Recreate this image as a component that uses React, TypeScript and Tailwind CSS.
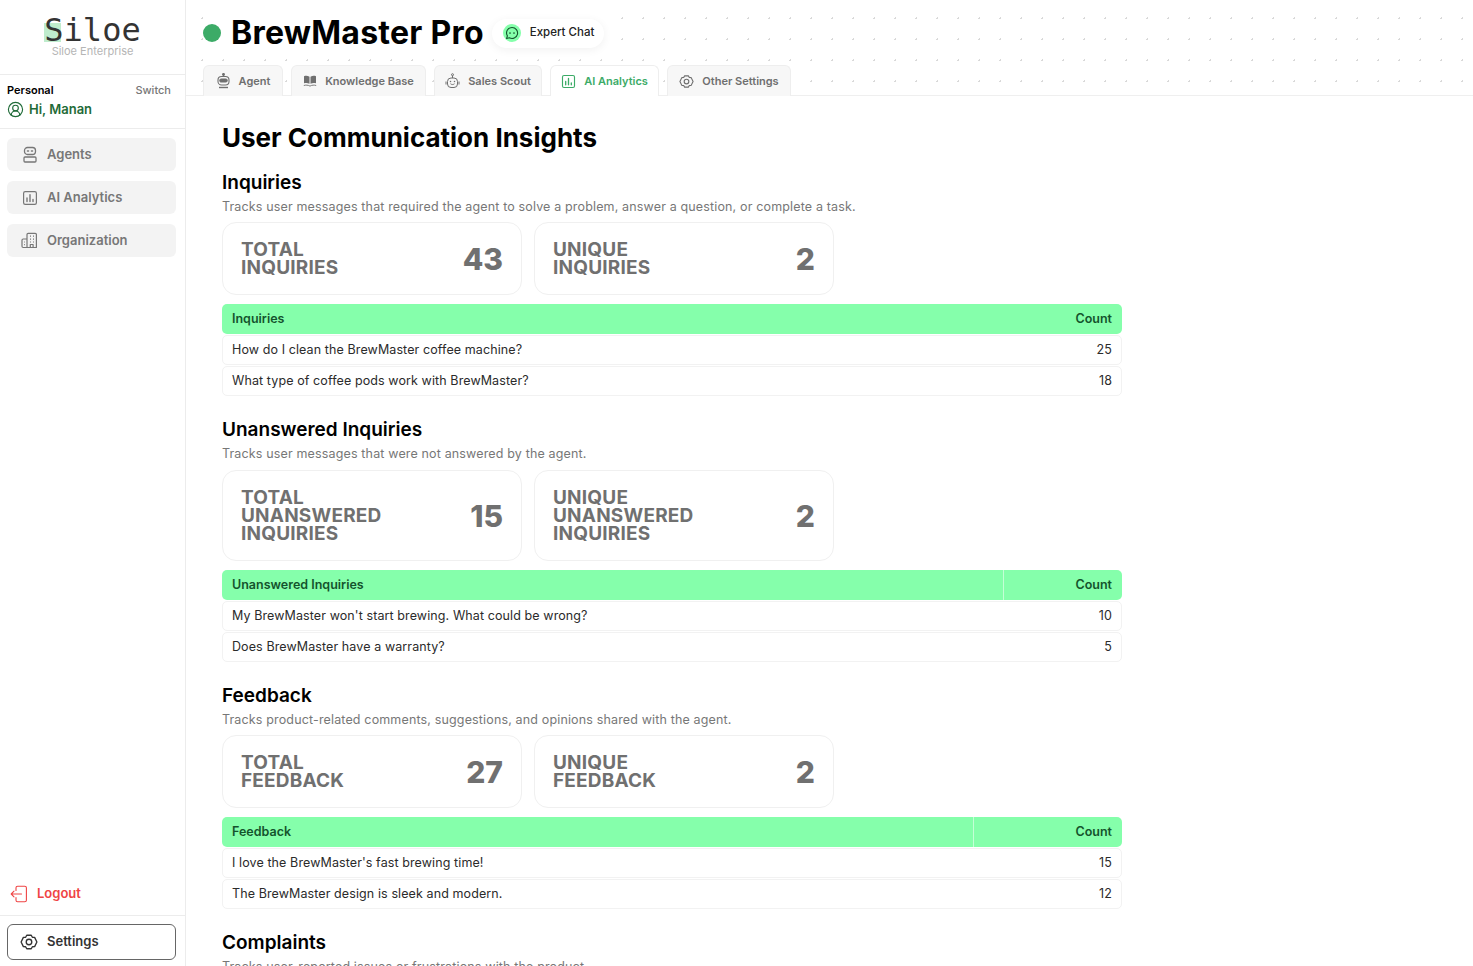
import { CircleUserRound } from "lucide-react";
import type { ReactNode } from "react";

const sections = [
  {
    title: "Inquiries",
    desc: "Tracks user messages that required the agent to solve a problem, answer a question, or complete a task.",
    cards: [
      { label: ["TOTAL", "INQUIRIES"], value: "43" },
      { label: ["UNIQUE", "INQUIRIES"], value: "2" },
    ],
    head: "Inquiries",
    divider: "",
    rows: [
      ["How do I clean the BrewMaster coffee machine?", "25"],
      ["What type of coffee pods work with BrewMaster?", "18"],
    ],
  },
  {
    title: "Unanswered Inquiries",
    desc: "Tracks user messages that were not answered by the agent.",
    cards: [
      { label: ["TOTAL", "UNANSWERED", "INQUIRIES"], value: "15" },
      { label: ["UNIQUE", "UNANSWERED", "INQUIRIES"], value: "2" },
    ],
    head: "Unanswered Inquiries",
    divider: "border-l border-[#c4ffd6] w-[119px]",
    rows: [
      ["My BrewMaster won't start brewing. What could be wrong?", "10"],
      ["Does BrewMaster have a warranty?", "5"],
    ],
  },
  {
    title: "Feedback",
    desc: "Tracks product-related comments, suggestions, and opinions shared with the agent.",
    cards: [
      { label: ["TOTAL", "FEEDBACK"], value: "27" },
      { label: ["UNIQUE", "FEEDBACK"], value: "2" },
    ],
    head: "Feedback",
    divider: "border-l border-[#c4ffd6] w-[149px]",
    rows: [
      ["I love the BrewMaster's fast brewing time!", "15"],
      ["The BrewMaster design is sleek and modern.", "12"],
    ],
  },
];

function AgentIcon() {
  return (
    <svg width="16" height="18" viewBox="0 0 16 18" fill="none" stroke="#777" strokeWidth="1.3">
      <rect x="2.5" y="1.5" width="11" height="7" rx="3" />
      <rect x="2" y="11" width="12" height="5" rx="1" />
      <path d="M5.5 5h1M9.5 5h1" strokeLinecap="round" strokeWidth="1.6" />
    </svg>
  );
}

function ChartBoxIcon({ size, color }: { size: number; color: string }) {
  return (
    <svg width={size} height={size} viewBox="0 0 16 16" fill="none" stroke={color} strokeWidth="1.2">
      <rect x="1.6" y="1.6" width="12.8" height="12.8" rx="1.6" />
      <path d="M5 11.5V8M8 11.5V4.8M11 11.5v-2" strokeWidth="1.4" strokeLinecap="round" />
    </svg>
  );
}

function BuildingIcon() {
  return (
    <svg width="17" height="17" viewBox="0 0 17 17" fill="none" stroke="#777" strokeWidth="1.2" strokeLinejoin="round">
      <path d="M6 15.5V2.5a1.2 1.2 0 0 1 1.2-1.2h7a1.2 1.2 0 0 1 1.2 1.2v13z" />
      <path d="M6 7H2.2A1.2 1.2 0 0 0 1 8.2v6.1c0 .7.5 1.2 1.2 1.2H6" />
      <path d="M9.3 15.5v-3h2.8v3M9 4.2h1M12 4.2h1M9 7.2h1M12 7.2h1M9 10h1M12 10h1M3.2 10h.8M3.2 12.7h.8" />
    </svg>
  );
}

function GearIcon({ size, color }: { size: number; color: string }) {
  return (
    <svg width={size} height={size} viewBox="0 0 24 24" fill="none" stroke={color} strokeWidth="1.8" strokeLinejoin="round">
      <path d="M9 3h6l1.5 2.7 3 .1L22.5 12l-3 6.2-3 .1L15 21H9l-1.5-2.7-3-.1L1.500 12l3-6.200 3-.1z" />
      <circle cx="12" cy="12" r="3.700" />
    </svg>
  );
}

function LogoutIcon() {
  return (
    <svg width="18" height="18" viewBox="0 0 18 18" fill="none" stroke="#ef4444" strokeWidth="1.1" strokeLinecap="round" strokeLinejoin="round">
      <path d="M6 5.500V2.800C6 1.900 6.700 1.200 7.600 1.200h7.200c.9 0 1.600.7 1.600 1.600v12.400c0 .9-.7 1.600-1.600 1.600H7.600C6.700 16.800 6 16.100 6 15.200v-2.700" />
      <path d="M11.500 9H1.200M4 6.200 1.200 9 4 11.800" />
    </svg>
  );
}

function RobotTabIcon() {
  return (
    <svg width="15" height="16" viewBox="0 0 15 16" fill="none" stroke="#6f6f6f" strokeWidth="1.1">
      <path d="M7.500 1v2.500" />
      <circle cx="7.500" cy="1.400" r=".9" fill="#6f6f6f" />
      <rect x="2" y="3.500" width="11" height="8.500" rx="3.500" />
      <rect x="3.800" y="6" width="7.400" height="3" rx="1.500" fill="#6f6f6f" />
      <path d="M3 14.500h9" strokeWidth="1.400" />
    </svg>
  );
}

function BookIcon() {
  return (
    <svg width="14" height="14" viewBox="0 0 14 14" fill="#6f6f6f">
      <path d="M1 2.200C2.800 1.600 4.800 1.700 6.500 2.700v7C4.800 8.800 2.800 8.700 1 9.300z" />
      <path d="M13 2.200c-1.800-.6-3.800-.5-5.500.5v7c1.700-.9 3.700-1 5.500-.4z" />
      <path d="M.8 11.500c2-.6 4.300-.5 6.200.6 1.900-1.100 4.200-1.200 6.200-.6" fill="none" stroke="#6f6f6f" strokeWidth=".9" />
    </svg>
  );
}

function ScoutIcon() {
  return (
    <svg width="15" height="16" viewBox="0 0 15 16" fill="none" stroke="#6f6f6f" strokeWidth="1">
      <circle cx="7.500" cy="1.700" r="1" />
      <path d="M7.500 2.700V5M1 8.500v3M14 8.500v3" />
      <rect x="2.500" y="5" width="10" height="9.500" rx="3.500" />
      <path d="M5.500 8.500h.01M9.500 8.500h.01" strokeWidth="1.500" strokeLinecap="round" />
      <path d="M5.800 11c.9.8 2.500.8 3.400 0" strokeLinecap="round" />
    </svg>
  );
}

function ChatIcon() {
  return (
    <svg width="14" height="14" viewBox="0 0 14 14" fill="none" stroke="#14532d" strokeWidth="1.100" strokeLinecap="round" strokeLinejoin="round">
      <path d="M7 1.500a5.500 5.500 0 1 1-2.600 10.300L1.600 12.500l.8-2.600A5.500 5.500 0 0 1 7 1.500z" />
      <path d="M5 7h.01M9 7h.01" strokeWidth="1.700" />
    </svg>
  );
}

function SideItem({ icon, label }: { icon: ReactNode; label: string }) {
  return (
    <div className="flex h-[33px] items-center gap-[9px] rounded-md bg-[#f3f3f3] pl-[14px] text-[13px] font-semibold text-[#777]">
      <span className="flex w-[17px] justify-center">{icon}</span>
      {label}
    </div>
  );
}

function Tab({ icon, label, width, active }: { icon: ReactNode; label: string; width: string; active?: boolean }) {
  return (
    <div
      className={`flex h-[31px] items-center justify-center gap-[8px] rounded-t-md border border-b-0 border-[#eeeeee] text-[11px] font-semibold ${width} ${
        active ? "bg-white text-[#3cab67]" : "bg-[#f7f7f7] text-[#6f6f6f]"
      }`}
    >
      {icon}
      {label}
    </div>
  );
}

function StatCard({ label, value }: { label: string[]; value: string }) {
  return (
    <div className="flex w-[300px] items-center justify-between rounded-[14px] border border-[#f0f0f0] bg-white py-[17.5px] pl-[18px] pr-[18px]">
      <div className="text-[19px] font-bold leading-[18px] tracking-[0.2px] text-[#707070]">
        {label.map((line) => (
          <div key={line}>{line}</div>
        ))}
      </div>
      <div className="text-[30px] font-extrabold leading-none text-[#707070]">{value}</div>
    </div>
  );
}

function DataTable({ head, divider, rows }: { head: string; divider: string; rows: string[][] }) {
  return (
    <div className="mt-[9px] flex w-[900px] flex-col gap-px">
      <div className="flex h-[30px] items-center justify-between rounded-[5px] bg-[#85ffab] text-[12.5px] font-semibold text-[#14532d]">
        <span className="pl-[10px]">{head}</span>
        <span className={`flex h-full items-center justify-end pr-[10px] ${divider}`}>Count</span>
      </div>
      {rows.map(([text, count]) => (
        <div key={text} className="flex h-[30px] items-center justify-between rounded-[5px] border border-[#f2f2f2] bg-white px-[9px] text-[12.5px] tracking-[0.1px] text-[#2b2b2b]">
          <span>{text}</span>
          <span>{count}</span>
        </div>
      ))}
    </div>
  );
}

export default function App() {
  return (
    <div className="flex h-screen overflow-hidden bg-white font-['Inter','Liberation_Sans',sans-serif]">
      {/* sidebar */}
      <aside className="flex h-full w-[186px] shrink-0 flex-col border-r border-[#ececec]">
        <div className="flex h-[75px] flex-col items-center border-b border-[#ececec] pt-[15px]">
          <div className="relative font-['DejaVu_Sans_Mono',monospace] text-[32px] leading-[30px] text-[#333]">
            <span className="absolute left-0 top-[8px] h-[19px] w-[17px] bg-[#bfeccd]" />
            <span className="relative">Siloe</span>
          </div>
          <div className="text-[11px] leading-[12px] text-[#b5b5b5]">Siloe Enterprise</div>
        </div>
        <div className="flex h-[54px] flex-col justify-center gap-px border-b border-[#ececec] pb-[2px] pl-[7px] pr-[14px]">
          <div className="flex items-center justify-between text-[11px] font-semibold text-black">
            Personal
            <span className="font-medium text-[#777]">Switch</span>
          </div>
          <div className="flex items-center gap-[5px] text-[13px] font-semibold text-[#1f6b38]">
            <CircleUserRound size={17} strokeWidth={1.6} />
            Hi, Manan
          </div>
        </div>
        <nav className="mt-[9px] flex flex-col gap-[10px] pl-[7px] pr-[9px]">
          <SideItem icon={<AgentIcon />} label="Agents" />
          <SideItem icon={<ChartBoxIcon size={16} color="#777" />} label="AI Analytics" />
          <SideItem icon={<BuildingIcon />} label="Organization" />
        </nav>
        <div className="mt-auto flex h-[44px] items-center gap-[9px] border-b border-[#ececec] pl-[10px] text-[13px] font-semibold text-[#ef4444]">
          <LogoutIcon />
          Logout
        </div>
        <div className="pb-[6px] pl-[7px] pr-[9px] pt-[8px]">
          <div className="flex h-[36px] items-center gap-[9px] rounded-md border border-[#666] pl-[12px] text-[13px] font-semibold text-[#333]">
            <GearIcon size={18} color="#333" />
            Settings
          </div>
        </div>
      </aside>

      <main className="flex min-w-0 flex-1 flex-col">
        {/* header */}
        <header className="h-[96px] shrink-0 border-b border-[#efefef] bg-[radial-gradient(#d9d9d9_1px,transparent_1px)] bg-[size:21px_21px] bg-[position:6px_8px] pl-[17px]">
          <div className="flex h-[65px] items-center pt-[1px]">
            <div className="flex h-[48px] w-fit items-center bg-white pr-[12px]">
              <span className="h-[18px] w-[18px] rounded-full bg-[#3cab67]" />
              <h1 className="ml-[10px] text-[32px] font-bold leading-[38px] tracking-[0.25px] text-black">BrewMaster Pro</h1>
              <div className="ml-[8px] flex h-[29px] items-center gap-[9px] rounded-full bg-white pl-[11px] pr-[10px] text-[11.5px] font-medium text-[#222] shadow-[0_2px_10px_rgba(0,0,0,0.06)]">
                <span className="flex h-[18px] w-[18px] items-center justify-center rounded-full bg-[#85ffab]">
                  <ChatIcon />
                </span>
                Expert Chat
              </div>
            </div>
          </div>
          <div className="flex gap-[8px]">
            <Tab width="w-[80px]" label="Agent" icon={<RobotTabIcon />} />
            <Tab width="w-[135px]" label="Knowledge Base" icon={<BookIcon />} />
            <Tab width="w-[108px]" label="Sales Scout" icon={<ScoutIcon />} />
            <Tab width="w-[109px]" label="AI Analytics" active icon={<ChartBoxIcon size={15} color="#3cab67" />} />
            <Tab width="w-[124px]" label="Other Settings" icon={<GearIcon size={15} color="#6f6f6f" />} />
          </div>
        </header>

        {/* content */}
        <div className="min-h-0 flex-1 overflow-hidden pl-[36px]">
          <h2 className="mb-[18px] mt-[26px] text-[26px] font-bold leading-[32px] text-black">User Communication Insights</h2>
          {sections.map((s) => (
            <section key={s.title} className="mb-[23px]">
              <h3 className="text-[19px] font-semibold leading-[22px] text-black">{s.title}</h3>
              <p className="mt-[3.5px] text-[12.5px] leading-[17px] tracking-[0.15px] text-[#777]">{s.desc}</p>
              <div className={`flex gap-[12px] ${s.cards[0].label.length === 3 ? "mt-[8.5px]" : "mt-[7.5px]"}`}>
                {s.cards.map((c) => (
                  <StatCard key={c.label.join(" ")} label={c.label} value={c.value} />
                ))}
              </div>
              <DataTable head={s.head} divider={s.divider} rows={s.rows} />
            </section>
          ))}
          <section>
            <h3 className="text-[19px] font-semibold leading-[22px] text-black">Complaints</h3>
            <p className="mt-[3.5px] text-[12.5px] leading-[17px] tracking-[0.15px] text-[#777]">Tracks user-reported issues or frustrations with the product.</p>
          </section>
        </div>
      </main>
    </div>
  );
}
